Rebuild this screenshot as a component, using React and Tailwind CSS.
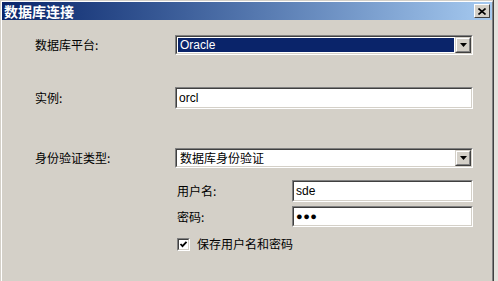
import React from 'react';

const cjk = { fontFamily: '"Noto Sans CJK SC", "Liberation Sans", sans-serif' };
const latin = { fontFamily: '"Liberation Sans", "Noto Sans CJK SC", sans-serif' };

// Win2000 style sunken box (2px bevel)
function Sunken({ className = '', children }) {
  return (
    <div className={`border border-t-[#808080] border-l-[#808080] border-b-white border-r-white ${className}`}>
      <div className="h-full w-full border border-t-[#404040] border-l-[#404040] border-b-[#d4d0c8] border-r-[#d4d0c8] bg-white">
        {children}
      </div>
    </div>
  );
}

function ArrowButton() {
  return (
    <div className="h-full w-[16px] shrink-0 border border-t-[#d4d0c8] border-l-[#d4d0c8] border-b-[#404040] border-r-[#404040]">
      <div className="h-full w-full border border-t-white border-l-white border-b-[#808080] border-r-[#808080] bg-[#d4d0c8] flex items-center justify-center">
        <svg width="7" height="4" viewBox="0 0 7 4">
          <path d="M0 0h7L3.5 4z" fill="#000" />
        </svg>
      </div>
    </div>
  );
}

function Combo({ value, selected, font }) {
  return (
    <Sunken className="h-[20px] w-[298px]">
      <div className="flex h-full">
        <div className="flex-1 p-[1px]">
          <div
            className={`h-full flex items-center pl-[2px] text-[12px] leading-none ${selected ? 'bg-[#0a246a] text-white' : 'text-black'}`}
            style={font}
          >
            {value}
          </div>
        </div>
        <ArrowButton />
      </div>
    </Sunken>
  );
}

function TextBox({ value, className = '', children }) {
  return (
    <Sunken className={className}>
      <div className="h-full flex items-center pl-[2px] text-[12px] leading-none text-black" style={latin}>
        {children || value}
      </div>
    </Sunken>
  );
}

export default function App() {
  return (
    <div className="w-[498px] h-[281px] bg-[#e4e2dc] overflow-hidden">
      <div className="w-[494px] h-[281px] bg-[#d4d0c8] pl-[1px] pt-[1px] border-r border-[#404040]">
        <div className="h-full border-t border-l border-white border-r border-r-[#808080]">
          {/* title bar */}
          <div className="h-[18px] flex items-center justify-between bg-gradient-to-r from-[#0a246a] to-[#a6caf0] pl-[2px] pr-[2px]">
            <span className="text-white text-[14px] font-bold leading-none" style={cjk}>数据库连接</span>
            <div className="h-[14px] w-[16px] border border-t-white border-l-white border-b-[#404040] border-r-[#404040] bg-[#d4d0c8] flex items-center justify-center">
              <svg width="8" height="7" viewBox="0 0 8 7">
                <path d="M0.5 0.5L7.5 6.5M7.5 0.5L0.5 6.5" stroke="#000" strokeWidth="1.6" />
              </svg>
            </div>
          </div>

          <div className="pl-[33px] text-[12px] text-black" style={cjk}>
            <div className="mt-[15px] h-[20px] flex items-center">
              <span className="w-[140px]">数据库平台:</span>
              <Combo value="Oracle" selected font={latin} />
            </div>

            <div className="mt-[32px] h-[22px] flex items-center">
              <span className="w-[140px]">实例:</span>
              <TextBox value="orcl" className="h-[22px] w-[298px]" />
            </div>

            <div className="mt-[39px] h-[20px] flex items-center">
              <span className="w-[140px]">身份验证类型:</span>
              <Combo value="数据库身份验证" font={cjk} />
            </div>

            <div className="pl-[142px]">
              <div className="mt-[12px] h-[22px] flex items-center">
                <span className="w-[115px]">用户名:</span>
                <TextBox value="sde" className="h-[22px] w-[181px]" />
              </div>
              <div className="mt-[4px] h-[21px] flex items-center">
                <span className="w-[115px]">密码:</span>
                <TextBox className="h-[21px] w-[181px]">
                  <span className="text-[11px] tracking-[0.5px]">●●●</span>
                </TextBox>
              </div>
              <div className="mt-[8px] flex items-center gap-[7px]">
                <Sunken className="h-[13px] w-[13px]">
                  <svg width="9" height="9" viewBox="0 0 9 9" className="block">
                    <path d="M1.5 4L3.5 6.2L7.5 1.8" stroke="#000" strokeWidth="1.8" fill="none" />
                  </svg>
                </Sunken>
                <span>保存用户名和密码</span>
              </div>
            </div>
          </div>
        </div>
      </div>
    </div>
  );
}
